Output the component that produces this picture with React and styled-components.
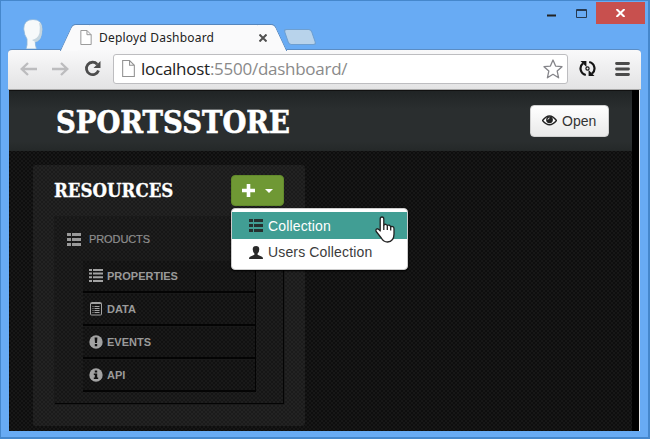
import React from "react";
import styled, { createGlobalStyle, css } from "styled-components";

const Global = createGlobalStyle`
  * { box-sizing: border-box; }
  body { margin: 0; background: #68abf4; }
  svg { display: block; flex: none; }
`;

const weave = css`
  background-image: conic-gradient(rgba(255,255,255,0.035) 25%, transparent 0 50%, rgba(255,255,255,0.035) 0 75%, transparent 0);
  background-size: 4px 4px;
`;

const Window = styled.div`
  width: 650px;
  height: 439px;
  display: flex;
  flex-direction: column;
  padding: 0 8px 6px 8px;
  background: #68abf4;
  border: 1px solid #4587cc;
  border-width: 1px 2px 2px 1px;
  overflow: hidden;
  font-family: "Open Sans", "Noto Sans", sans-serif;
`;

const TabStrip = styled.header`
  height: 48px;
  flex: none;
  display: flex;
  align-items: flex-end;
`;

const Profile = styled.div`
  width: 20px;
  height: 30px;
  margin-left: 14px;
`;

const Tab = styled.div`
  position: relative;
  z-index: 1;
  width: 199px;
  height: 26px;
  margin: 0 0 -1px 31px;
  padding: 0 6px 0 6px;
  display: flex;
  align-items: center;
  gap: 7px;
  background: #fafafb;
  border-top: 1px solid #5586bd;
  color: #222;
  font: 12px "Noto Sans", sans-serif;
  &::before, &::after {
    content: "";
    position: absolute;
    z-index: -1;
    top: -1px;
    width: 17px;
    height: 26px;
    background: #fafafb;
    border-top: 1px solid #5586bd;
  }
  &::before {
    left: -8px;
    transform: skewX(-25deg);
    border-left: 1px solid #5586bd;
    border-top-left-radius: 4px;
  }
  &::after {
    right: -8px;
    transform: skewX(25deg);
    border-right: 1px solid #5586bd;
    border-top-right-radius: 4px;
  }
`;

const TabTitle = styled.span`
  flex: 1;
  white-space: nowrap;
  letter-spacing: 0.2px;
`;

const NewTab = styled.div`
  width: 28px;
  height: 16px;
  margin: 0 0 4px 13px;
  background: #b8d3eb;
  border: 1px solid #6e9fd0;
  border-radius: 3px;
  transform: skewX(19deg);
`;

const WindowControls = styled.div`
  align-self: flex-start;
  display: flex;
  margin: 1px 0 0 auto;
`;

const Control = styled.div`
  width: ${(p) => (p.$close ? 49 : 30)}px;
  height: 22px;
  display: flex;
  align-items: center;
  justify-content: center;
  background: ${(p) => (p.$close ? "#c8504e" : "transparent")};
  margin-right: ${(p) => (p.$close ? -5 : 0)}px;
`;

const Toolbar = styled.nav`
  height: 41px;
  flex: none;
  display: flex;
  align-items: center;
  margin: 0 -1px;
  padding: 0 11px 2px 12px;
  background: linear-gradient(#f9f9fa, #e3e3e4);
  border-top: 1px solid #5b8dc4;
  border-bottom: 1px solid #a9a9a9;
  border-radius: 4px 4px 0 0;
`;

const NavIcon = styled.div`
  width: 17px;
  margin-right: ${(p) => p.$gap}px;
`;

const Address = styled.div`
  width: 455px;
  height: 30px;
  margin-right: 11px;
  padding: 0 4px 0 8px;
  display: flex;
  align-items: center;
  background: #fff;
  border: 1px solid #bdbdc0;
  border-radius: 3px;
`;

const Url = styled.div`
  flex: 1;
  margin-left: 6px;
  color: #222;
  font-size: 17px;
  line-height: 28px;
  letter-spacing: -0.26px;
  white-space: nowrap;
`;

const Muted = styled.span`
  color: #8a8a8a;
`;

const Viewport = styled.div`
  flex: 1;
  min-height: 0;
  display: flex;
  background: #000;
  border-right: 1px solid #e6e6e6;
  overflow: hidden;
`;

const Page = styled.main`
  width: 623px;
  background-color: #0e0e0e;
  ${weave}
  font-family: "Liberation Sans", Arial, sans-serif;
`;

const Masthead = styled.div`
  height: 61px;
  display: flex;
  align-items: center;
  justify-content: space-between;
  padding: 0 24px 0 47px;
  background: linear-gradient(#202425, #2a2e2f 30%, #2a2e2f 85%, #252929);
  border-top: 1px solid #111;
  border-bottom: 1px solid #242828;
`;

const SiteTitle = styled.h1`
  width: 236px;
  margin: 3px 0 0;
  color: #fff;
  font: bold 32px/40px "DejaVu Serif Condensed", "DejaVu Serif", serif;
  -webkit-text-stroke: 0.6px #fff;
  white-space: nowrap;
  transform: scaleX(0.953);
  transform-origin: left;
`;

const OpenButton = styled.button`
  width: 79px;
  height: 32px;
  margin: 0 -1px 0 0;
  padding: 0 11px;
  display: flex;
  align-items: center;
  gap: 5px;
  background: linear-gradient(#fff, #e9e9e9);
  border: 1px solid #d0d0d0;
  border-radius: 4px;
  color: #333;
  font: 14px "Liberation Sans", Arial, sans-serif;
`;

const Panel = styled.section`
  width: 272px;
  height: 261px;
  margin: 14px 0 0 24px;
  padding: 10px 22px 0;
  background-color: #1b1b1b;
  ${weave}
  border-radius: 3px;
`;

const PanelHeader = styled.div`
  height: 31px;
  display: flex;
  align-items: center;
  justify-content: space-between;
`;

const PanelTitle = styled.h2`
  margin: 1px 0 0 -1px;
  color: #fff;
  width: 120px;
  font: bold 18.5px/24px "DejaVu Serif Condensed", "DejaVu Serif", serif;
  -webkit-text-stroke: 0.3px #fff;
  white-space: nowrap;
`;

const MenuAnchor = styled.div`
  position: relative;
  margin-right: -1px;
`;

const AddButton = styled.button`
  width: 53px;
  height: 31px;
  margin: 0;
  padding: 0 10px;
  display: flex;
  align-items: center;
  justify-content: space-between;
  background: #6f9834;
  border: 1px solid #628a2b;
  border-radius: 4px;
`;

const Menu = styled.ul`
  position: absolute;
  z-index: 2;
  top: 33px;
  left: 0;
  width: 177px;
  height: 62px;
  margin: 0;
  padding: 3px 0;
  list-style: none;
  background: #fff;
  border: 1px solid #ccc;
  border-radius: 4px;
  box-shadow: 0 1px 2px #000;
`;

const MenuItem = styled.li`
  height: ${(p) => (p.$active ? 27 : 26)}px;
  display: flex;
  align-items: center;
  gap: 5px;
  padding-left: 17px;
  background: ${(p) => (p.$active ? "#419e94" : "transparent")};
  color: ${(p) => (p.$active ? "#fff" : "#3b3b3b")};
  font-size: 14px;
  letter-spacing: 0.15px;
  white-space: nowrap;
`;

const Pointer = styled.div`
  position: absolute;
  top: 7px;
  right: 12px;
`;

const ResourceCard = styled.div`
  width: 229px;
  height: 187px;
  margin-top: 11px;
  background-color: #161616;
  ${weave}
  border: solid #040404;
  border-width: 0 1px 1px 0;
  box-shadow: 0 0 0 1px #1a1a1a;
`;

const ResourceName = styled.div`
  height: 43px;
  display: flex;
  align-items: center;
  gap: 8px;
  padding: 1px 0 0 12px;
  color: #8f8f8f;
  font-size: 11px;
  letter-spacing: -0.1px;
  -webkit-text-stroke: 0.2px #8f8f8f;
`;

const SectionList = styled.ul`
  width: 173px;
  margin: 0 0 0 28px;
  padding: 0;
  list-style: none;
  border-right: 1px solid #030303;
`;

const Section = styled.li`
  height: 33px;
  display: flex;
  align-items: center;
  gap: 4px;
  padding: 0 0 1px 6px;
  background-color: #111;
  ${weave}
  border-top: 1px solid #191919;
  border-bottom: 2px solid #040404;
  color: #9a9a9a;
  font-size: 11px;
  font-weight: bold;
`;

const FileIcon = ({ w = 12, h = 16 }) => (
  <svg width={w} height={h} viewBox="0 0 12 16" fill="#fff" stroke="#929292">
    <path d="M.5 .5H7L11.5 5V15.5H.5ZM7 .5V5H11.5" />
  </svg>
);

const ListIcon = ({ color = "#9a9a9a" }) => (
  <svg width="14" height="13" fill={color}>
    <path d="M0 0h4v3H0zM5 0h9v3H5zM0 5h4v3H0zM5 5h9v3H5zM0 10h4v3H0zM5 10h9v3H5z" />
  </svg>
);

const RowsIcon = () => (
  <svg width="14" height="13" fill="#a2a2a2">
    <path d="M0 0h3v2H0zM4 0h10v2H4zM0 3.6h3v2H0zM4 3.6h10v2H4zM0 7.3h3v2H0zM4 7.3h10v2H4zM0 11h3v2H0zM4 11h10v2H4z" />
  </svg>
);

const DataIcon = () => (
  <svg width="14" height="14" fill="none" stroke="#a2a2a2">
    <rect x="1.5" y=".5" width="11" height="12.5" rx="1" />
    <path d="M2 1.5H12M3.5 4.5h1M5.5 4.5h5M3.5 6.5h1M5.5 6.5h5M3.5 8.5h1M5.5 8.5h5M3.5 10.5h1M5.5 10.5h5" />
  </svg>
);

const AlertIcon = () => (
  <svg width="14" height="14">
    <circle cx="7" cy="7" r="6.7" fill="#a2a2a2" />
    <path d="M5.6 2.5h2.8L8 8H6zM5.8 9h2.4v2.2H5.8z" fill="#111" />
  </svg>
);

const InfoIcon = () => (
  <svg width="14" height="14">
    <circle cx="7" cy="7" r="6.7" fill="#a2a2a2" />
    <path d="M5.8 2.5h2.4v2H5.8zM4.8 5.5h3.4v4h1v1.6H4.8V9.5h1V7h-1z" fill="#111" />
  </svg>
);

const ArrowIcon = ({ flip }) => (
  <svg width="17" height="14" fill="none" stroke="#bcbcbe" strokeWidth="2.3">
    <path d={flip ? "M0 7H15M9 1L15.3 7L9 13" : "M17 7H2M8 1L1.7 7L8 13"} />
  </svg>
);

const ReloadIcon = () => (
  <svg width="17" height="17" fill="none" stroke="#4c4c4c" strokeWidth="2.8">
    <path d="M13.2 4.2A6.2 6.2 0 1 0 14.5 10.5" />
    <path d="M16.5 1V8H9.5Z" fill="#4c4c4c" stroke="none" />
  </svg>
);

const ProfileIcon = () => (
  <svg width="20" height="30" viewBox="0 0 20 30">
    <path d="M3 30L4 26L4 20Q1.2 16 .7 10Q.7 .5 10 .5Q19.5 .5 19.2 10Q19 17.5 16.5 20.5Q14.5 22.8 12.3 23L12.5 26L13.5 30Z" fill="#f6f9fa" stroke="#89b5dc" strokeWidth=".8" />
    <path d="M16 3.5Q17.5 8 16.5 14Q15 19.5 9 21L12.3 23Q14.5 22.8 16.5 20.5Q19 17.5 19.2 10Q19 5.5 16 3.5Z" fill="#c4d5df" />
  </svg>
);

const StarIcon = () => (
  <svg width="20" height="20" viewBox="0 0 20 20" fill="#fff" stroke="#85858a" strokeWidth="1.3" strokeLinejoin="round">
    <path d="M10 1L12.6 7.1L19 7.7L14.2 12.1L15.6 18.8L10 15.3L4.4 18.8L5.8 12.1L1 7.7L7.4 7.1Z" />
  </svg>
);

const SyncIcon = () => (
  <svg width="17" height="17" viewBox="0 0 17 17" fill="none" stroke="#151515" strokeWidth="2.2">
    <path d="M6.8 15A6.6 6.6 0 0 1 4 3.4M10.2 2A6.6 6.6 0 0 1 13 13.6" />
    <path d="M1.5 1H7.4V6.9ZM15.5 16H9.6V10.1Z" fill="#151515" stroke="none" />
    <circle cx="8.5" cy="8.5" r="1.6" strokeWidth="1.2" />
  </svg>
);

const MenuIcon = () => (
  <svg width="15" height="14" stroke="#4b4b4b" strokeWidth="2.8" strokeLinecap="round">
    <path d="M1.5 1.5H13.5M1.5 7H13.5M1.5 12.5H13.5" />
  </svg>
);

const EyeIcon = () => (
  <svg width="15" height="11" viewBox="0 0 15 11">
    <path d="M.5 5.5Q7.5 -3.5 14.5 5.5Q7.5 14 .5 5.5Z" fill="#fff" stroke="#222" strokeWidth="1.4" />
    <circle cx="7.5" cy="4.8" r="3.4" fill="#222" />
    <path d="M5.9 4.6Q6 3.1 7.5 3" fill="none" stroke="#fff" />
  </svg>
);

const UserIcon = () => (
  <svg width="14" height="13" fill="#292929">
    <path d="M3.7 3.3Q3.8 0 7 0Q10.2 0 10.3 3.3Q10.2 6.2 8.6 7.6V8.8L13 10.8Q14 11.3 14 13H0Q0 11.3 1 10.8L5.4 8.8V7.6Q3.8 6.2 3.7 3.3Z" />
  </svg>
);

const HandIcon = () => (
  <svg width="20" height="27" viewBox="0 0 20 27" fill="#fff" stroke="#222" strokeWidth="1.3" strokeLinejoin="round">
    <path d="M5.2 14V3Q5.2 1 7 1Q8.8 1 8.8 3V9Q10.8 7.3 12.3 9.5Q14.5 8.3 15.7 10.7Q19 9.8 19 13V18Q19 25.5 12.5 26Q8.5 26 6.3 22L1.2 15.5Q.3 13.5 2 12.8Q3.5 12.5 5.2 15Z" />
    <path d="M8.8 9V14M12.3 9.5V14M15.7 10.7V14.5" fill="none" />
  </svg>
);

const sections = [
  ["PROPERTIES", RowsIcon],
  ["DATA", DataIcon],
  ["EVENTS", AlertIcon],
  ["API", InfoIcon],
];

export default function App() {
  return (
    <Window>
      <Global />
      <TabStrip>
        <Profile><ProfileIcon /></Profile>
        <Tab>
          <FileIcon w={12} h={15} />
          <TabTitle>Deployd Dashboard</TabTitle>
          <svg width="8" height="8" stroke="#505050" strokeWidth="2"><path d="M.5 .5L7.5 7.5M7.5 .5L.5 7.5" /></svg>
        </Tab>
        <NewTab />
        <WindowControls>
          <Control><svg width="9" height="8"><path d="M0 6.5H9" stroke="#222" strokeWidth="2" /></svg></Control>
          <Control><svg width="11" height="9" fill="none" stroke="#263a51"><path d="M.5 .5H10.5V8.5H.5ZM0 1.5H11" /></svg></Control>
          <Control $close><svg width="9" height="8" stroke="#fff" strokeWidth="2"><path d="M.5 0L8.5 8M8.5 0L.5 8" /></svg></Control>
        </WindowControls>
      </TabStrip>
      <Toolbar>
        <NavIcon $gap={15}><ArrowIcon /></NavIcon>
        <NavIcon $gap={15}><ArrowIcon flip /></NavIcon>
        <NavIcon $gap={12}><ReloadIcon /></NavIcon>
        <Address>
          <FileIcon w={13} h={17} />
          <Url>localhost<Muted>:5500/dashboard/</Muted></Url>
          <StarIcon />
        </Address>
        <NavIcon $gap={19}><SyncIcon /></NavIcon>
        <MenuIcon />
      </Toolbar>
      <Viewport>
        <Page>
          <Masthead>
            <SiteTitle>SPORTSSTORE</SiteTitle>
            <OpenButton><EyeIcon />Open</OpenButton>
          </Masthead>
          <Panel>
            <PanelHeader>
              <PanelTitle>RESOURCES</PanelTitle>
              <MenuAnchor>
                <AddButton>
                  <svg width="13" height="13" fill="#fff"><path d="M4.7 0h3.6v4.7H13v3.6H8.3V13H4.7V8.3H0V4.7h4.7z" /></svg>
                  <svg width="8" height="4" fill="#fff"><path d="M0 0H8L4 4Z" /></svg>
                </AddButton>
                <Menu>
                  <MenuItem $active><ListIcon color="#26302f" />Collection</MenuItem>
                  <MenuItem><UserIcon />Users Collection</MenuItem>
                  <Pointer><HandIcon /></Pointer>
                </Menu>
              </MenuAnchor>
            </PanelHeader>
            <ResourceCard>
              <ResourceName><ListIcon />PRODUCTS</ResourceName>
              <SectionList>
                {sections.map(([name, Icon]) => (
                  <Section key={name}><Icon />{name}</Section>
                ))}
              </SectionList>
            </ResourceCard>
          </Panel>
        </Page>
      </Viewport>
    </Window>
  );
}
